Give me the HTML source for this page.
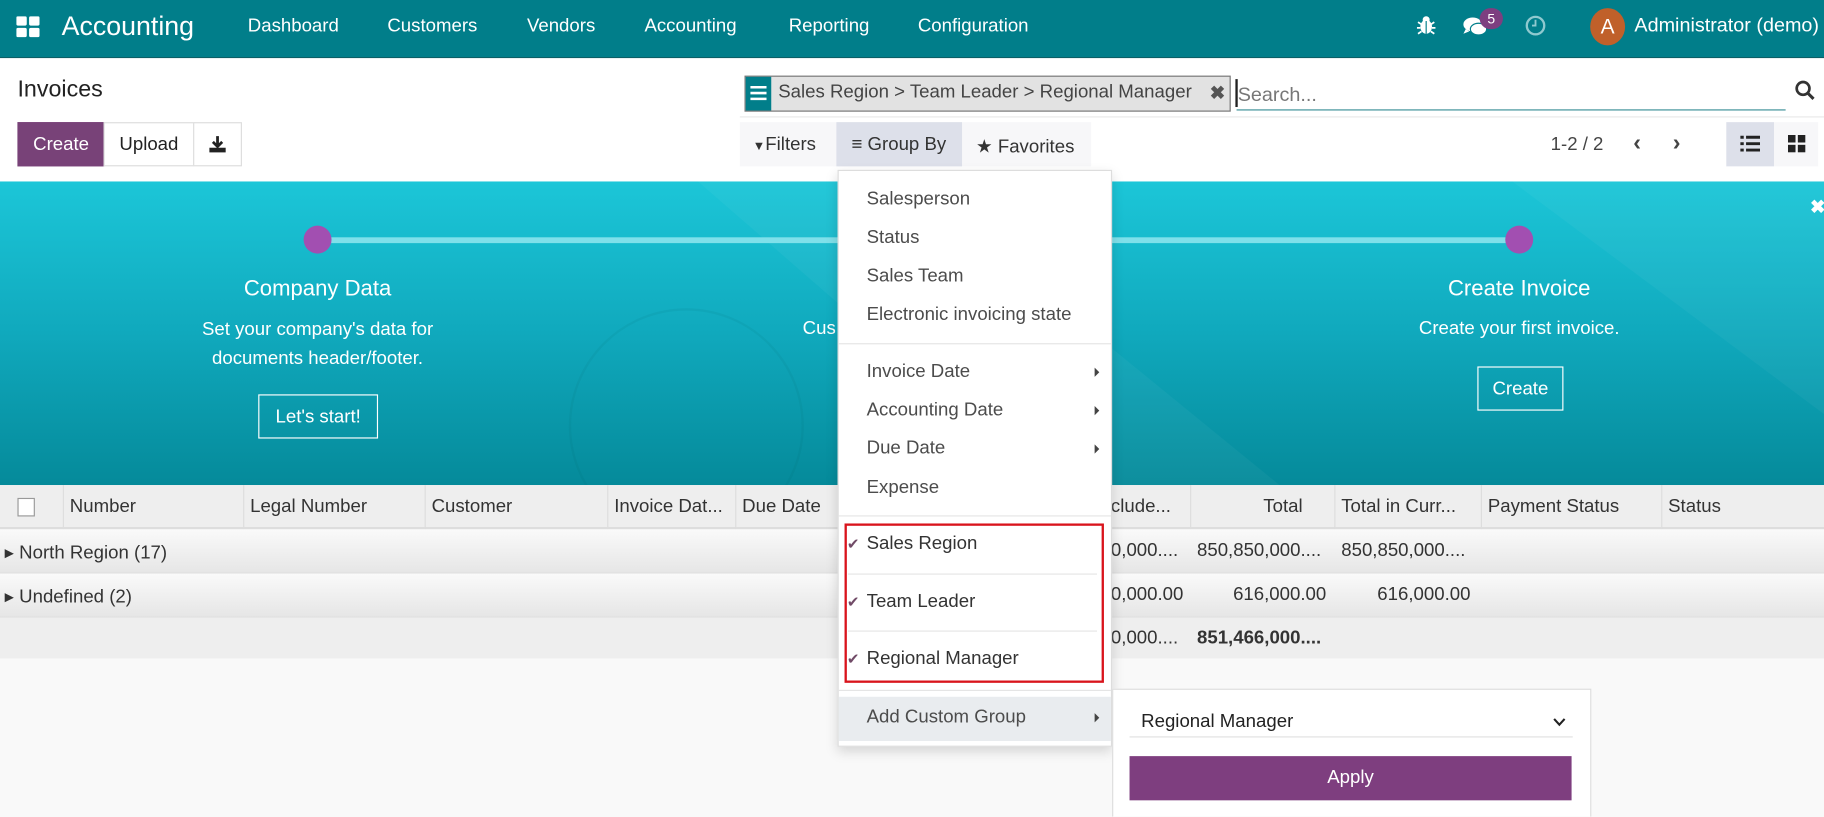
<!DOCTYPE html>
<html><head><meta charset="utf-8"><style>
*{box-sizing:border-box;margin:0;padding:0}
html,body{width:1824px;height:816px;overflow:hidden;background:#f9f9f9;font-family:"Liberation Sans",sans-serif;color:#4c4c4c}
#w{position:absolute;left:0;top:0;width:1568px;height:702px;transform:scale(1.16327);transform-origin:0 0;overflow:hidden;background:#f9f9f9}
.a{position:absolute;white-space:nowrap}
.nav{left:0;top:0;width:1568px;height:50px;background:#017e8a;border-bottom:1px solid #0b5f66;color:#fff}
.nav .a{font-size:16px;top:14px;color:#fff}
.cp{left:0;top:50px;width:1568px;height:106px;background:#fff}
.btn{position:absolute;top:105px;height:38px;border:1px solid #ddd;font-size:16px;line-height:37px;text-align:center;background:#fff;color:#222}
.banner{left:0;top:156px;width:1568px;height:261px;background:linear-gradient(180deg,#1cc6d8 0%,#10a9bd 50%,#058a9a 100%);overflow:hidden}
.bt{color:#fff;text-align:center;width:300px}
.dot{width:24px;height:24px;border-radius:50%;background:#a24fb1}
.obtn{border:1px solid #fff;color:#fff;font-size:16px;text-align:center;line-height:37px;height:38px}
.th{top:417px;height:38px;background:#eee;width:1568px;left:0;border-bottom:2px solid #ddd}
.th .a{font-size:16px;top:10px;color:#333}
.sep{position:absolute;top:0;width:1px;height:38px;background:#ddd}
.row{left:0;width:1568px;height:38px;background:linear-gradient(#fafafa,#e6e6e6);border-bottom:1px solid #ddd}
.row .a{font-size:16px;top:10px;color:#333}
.dd{left:720px;top:146px;width:236px;height:496px;background:#fff;border:1px solid #ddd;box-shadow:0 4px 10px rgba(0,0,0,.15)}
.dd .a{font-size:16px;color:#4c4c4c;left:24px}
.hr{position:absolute;left:0;width:234px;height:1px;background:#e5e5e5}
.car{position:absolute;left:220px;width:0;height:0;border-top:4px solid transparent;border-bottom:4px solid transparent;border-left:4px solid #444}
.chk{position:absolute;left:7px;color:#714b67;font-size:13px}
</style></head><body><div id="w">
<div class="a nav">
 <svg class="a" style="left:14px;top:14px" width="20" height="18" viewBox="0 0 20 18"><rect x="0" y="0" width="9" height="8" rx="1.5" fill="#fff"/><rect x="11" y="0" width="9" height="8" rx="1.5" fill="#fff"/><rect x="0" y="10" width="9" height="8" rx="1.5" fill="#fff"/><rect x="11" y="10" width="9" height="8" rx="1.5" fill="#fff"/></svg>
 <div class="a" style="left:53px;top:9px;font-size:23px">Accounting</div>
 <div class="a" style="left:213px">Dashboard</div>
 <div class="a" style="left:333px">Customers</div>
 <div class="a" style="left:453px">Vendors</div>
 <div class="a" style="left:554px">Accounting</div>
 <div class="a" style="left:678px">Reporting</div>
 <div class="a" style="left:789px">Configuration</div>
 <svg class="a" style="left:1218px;top:13px" width="16" height="17" viewBox="0 0 16 17"><ellipse cx="8" cy="10" rx="5" ry="6" fill="#fff"/><circle cx="8" cy="4" r="3" fill="#fff"/><path d="M1 6l3 2M15 6l-3 2M0 11h3M16 11h-3M1 16l3-2M15 16l-3-2" stroke="#fff" stroke-width="1.5"/><path d="M8 5v11" stroke="#017e8a" stroke-width="1"/></svg>
 <svg class="a" style="left:1257px;top:14px" width="22" height="18" viewBox="0 0 22 18"><ellipse cx="9" cy="7" rx="8" ry="6" fill="#fff"/><ellipse cx="14" cy="11" rx="7" ry="5" fill="#fff" stroke="#017e8a" stroke-width="1"/><path d="M3 11l-2 4 5-2z" fill="#fff"/></svg>
 <div class="a" style="left:1272px;top:7px;width:20px;height:18px;border-radius:9px;background:#7d3f80;font-size:12px;text-align:center;line-height:18px">5</div>
 <svg class="a" style="left:1311px;top:13px" width="18" height="18" viewBox="0 0 18 18"><circle cx="9" cy="9" r="7.5" fill="none" stroke="#8fc9cf" stroke-width="2"/><path d="M9 4v5h-3" stroke="#8fc9cf" stroke-width="1.6" fill="none"/></svg>
 <div class="a" style="left:1367px;top:7px;width:30px;height:32px;border-radius:50%;background:#c0602a;font-size:18px;text-align:center;line-height:32px">A</div>
 <div class="a" style="left:1405px;font-size:17px;top:12px">Administrator (demo)</div>
</div>
<div class="a cp">
 <div class="a" style="left:15px;top:16px;font-size:20px;color:#222">Invoices</div>
</div>
<div class="btn" style="left:15px;width:75px;background:#784278;color:#fff;border-color:#784278">Create</div>
<div class="btn" style="left:89px;width:78px">Upload</div>
<div class="btn" style="left:166px;width:42px"><svg style="margin-top:10px" width="16" height="16" viewBox="0 0 16 16"><path d="M8 1v8M4 6l4 4 4-4" stroke="#222" stroke-width="2.4" fill="none"/><rect x="1" y="11" width="14" height="4" fill="#222"/></svg></div>
<div class="a" style="left:640px;top:65px;width:418px;height:31px;background:#e2e2e2;border:1px solid #777"></div>
<div class="a" style="left:641px;top:66px;width:22px;height:29px;background:#017e8a"><svg style="margin:7px 0 0 4px" width="14" height="14" viewBox="0 0 14 14"><path d="M0 2h14M0 7h14M0 12h14" stroke="#fff" stroke-width="2.2"/></svg></div>
<div class="a" style="left:669px;top:71px;font-size:16px;color:#444">Sales Region &gt; Team Leader &gt; Regional Manager</div>
<div class="a" style="left:1040px;top:70px;font-size:16px;color:#555;font-weight:bold">✖</div>
<div class="a" style="left:1062px;top:68px;width:2px;height:24px;background:#222"></div>
<div class="a" style="left:1064px;top:72px;font-size:17px;color:#777">Search...</div>
<div class="a" style="left:1063px;top:94px;width:472px;height:1px;background:#3b8f97"></div>
<div class="a" style="left:636px;top:100px;width:932px;height:1px;background:#e8e8e8"></div>
<svg class="a" style="left:1543px;top:69px" width="17" height="17" viewBox="0 0 17 17"><circle cx="7" cy="7" r="5.5" fill="none" stroke="#333" stroke-width="2.3"/><path d="M11 11l5 5" stroke="#333" stroke-width="2.6"/></svg>
<div class="a" style="left:636px;top:105px;width:302px;height:38px;background:#f7f7f9"></div>
<div class="a" style="left:719px;top:105px;width:108px;height:38px;background:#dde0ea"></div>
<div class="a" style="left:647px;top:116px;font-size:16px;color:#333"><span style="font-size:11px">▼</span>Filters</div>
<div class="a" style="left:732px;top:116px;font-size:16px;color:#333">≡ Group By</div>
<div class="a" style="left:839px;top:116px;font-size:16px;color:#333">★ Favorites</div>
<div class="a" style="left:1333px;top:116px;font-size:16px;color:#444">1-2 / 2</div>
<div class="a" style="left:1404px;top:112px;font-size:20px;color:#444;font-weight:bold">‹</div>
<div class="a" style="left:1438px;top:112px;font-size:20px;color:#444;font-weight:bold">›</div>
<div class="a" style="left:1484px;top:105px;width:41px;height:38px;background:#dde0ea"></div>
<div class="a" style="left:1525px;top:105px;width:38px;height:38px;background:#f7f7f9"></div>
<svg class="a" style="left:1496px;top:116px" width="17" height="15" viewBox="0 0 17 15"><path d="M0 2h3M5 2h12M0 7.5h3M5 7.5h12M0 13h3M5 13h12" stroke="#222" stroke-width="2.5"/></svg>
<svg class="a" style="left:1537px;top:116px" width="15" height="15" viewBox="0 0 15 15"><rect width="6.5" height="6.5" fill="#222"/><rect x="8.5" width="6.5" height="6.5" fill="#222"/><rect y="8.5" width="6.5" height="6.5" fill="#222"/><rect x="8.5" y="8.5" width="6.5" height="6.5" fill="#222"/></svg>
<div class="a banner">
 <svg class="a" style="left:0;top:0" width="1568" height="261"><path d="M600 0 L900 261 L1100 261 L780 0Z" fill="rgba(255,255,255,.04)"/><path d="M1300 0 L1568 200 L1568 0Z" fill="rgba(255,255,255,.04)"/><circle cx="590" cy="210" r="100" fill="none" stroke="rgba(0,80,90,.07)" stroke-width="2"/></svg>
 <div class="a" style="left:273px;top:48px;width:1033px;height:5px;background:#7fe0ea"></div>
 <div class="a dot" style="left:261px;top:38px"></div>
 <div class="a dot" style="left:1294px;top:38px"></div>
 <div class="a bt" style="left:123px;top:82px;font-size:19px">Company Data</div>
 <div class="a bt" style="left:163px;top:115px;width:220px;font-size:16px;line-height:25px;white-space:normal">Set your company's data for documents header/footer.</div>
 <div class="a obtn" style="left:222px;top:183px;width:103px">Let's start!</div>
 <div class="a" style="left:690px;top:118px;font-size:16px;color:#fff">Cus</div>
 <div class="a bt" style="left:1156px;top:82px;font-size:19px">Create Invoice</div>
 <div class="a bt" style="left:1156px;top:118px;font-size:16px">Create your first invoice.</div>
 <div class="a obtn" style="left:1270px;top:159px;width:74px">Create</div>
 <div class="a" style="left:1556px;top:12px;font-size:16px;color:#fff;font-weight:bold">✖</div>
</div>
<div class="a th">
 <div class="a" style="left:15px;top:11px;width:15px;height:16px;background:#fff;border:1px solid #999"></div>
 <div class="sep" style="left:54px"></div><div class="sep" style="left:209px"></div><div class="sep" style="left:365px"></div><div class="sep" style="left:522px"></div><div class="sep" style="left:632px"></div><div class="sep" style="left:1023px"></div><div class="sep" style="left:1147px"></div><div class="sep" style="left:1273px"></div><div class="sep" style="left:1428px"></div>
 <div class="a" style="left:60px">Number</div>
 <div class="a" style="left:215px">Legal Number</div>
 <div class="a" style="left:371px">Customer</div>
 <div class="a" style="left:528px">Invoice Dat...</div>
 <div class="a" style="left:638px">Due Date</div>
 <div class="a" style="left:955px">clude...</div>
 <div class="a" style="left:1086px">Total</div>
 <div class="a" style="left:1153px">Total in Curr...</div>
 <div class="a" style="left:1279px">Payment Status</div>
 <div class="a" style="left:1434px">Status</div>
</div>
<div class="a row" style="top:455px">
 <div class="a" style="left:4px">▸ North Region (17)</div>
 <div class="a" style="left:955px">0,000....</div><div class="a" style="left:1029px">850,850,000....</div><div class="a" style="left:1153px">850,850,000....</div>
</div>
<div class="a row" style="top:493px">
 <div class="a" style="left:4px">▸ Undefined (2)</div>
 <div class="a" style="left:955px">0,000.00</div><div class="a" style="left:1060px">616,000.00</div><div class="a" style="left:1184px">616,000.00</div>
</div>
<div class="a row" style="top:531px;height:35px;background:#eee;border:none">
 <div class="a" style="left:955px;top:9px">0,000....</div><div class="a" style="left:1029px;top:9px;font-weight:bold">851,466,000....</div>
</div>
<div class="a dd">
 <div class="a" style="top:16px">Salesperson</div>
 <div class="a" style="top:49px">Status</div>
 <div class="a" style="top:82px">Sales Team</div>
 <div class="a" style="top:115px">Electronic invoicing state</div>
 <div class="hr" style="top:148px"></div>
 <div class="a" style="top:164px">Invoice Date</div><div class="car" style="top:169px"></div>
 <div class="a" style="top:197px">Accounting Date</div><div class="car" style="top:202px"></div>
 <div class="a" style="top:230px">Due Date</div><div class="car" style="top:235px"></div>
 <div class="a" style="top:264px">Expense</div>
 <div class="hr" style="top:296px"></div>
 <div class="a" style="left:5px;top:303px;width:223px;height:137px;border:2px solid #d9141c"></div>
 <div class="chk" style="top:313px">✔</div><div class="a" style="top:312px;color:#333">Sales Region</div>
 <div class="hr" style="top:346px;left:8px;width:214px"></div>
 <div class="chk" style="top:363px">✔</div><div class="a" style="top:362px;color:#333">Team Leader</div>
 <div class="hr" style="top:395px;left:8px;width:214px"></div>
 <div class="chk" style="top:412px">✔</div><div class="a" style="top:411px;color:#333">Regional Manager</div>
 <div class="hr" style="top:446px"></div>
 <div class="a" style="left:0;top:452px;width:234px;height:38px;background:#e9ecef"></div>
 <div class="a" style="top:461px">Add Custom Group</div><div class="car" style="top:466px"></div>
</div>
<div class="a" style="left:956px;top:592px;width:412px;height:120px;background:#fff;border:1px solid #ddd"></div>
<div class="a" style="left:981px;top:612px;font-size:16px;color:#222">Regional Manager</div>
<svg class="a" style="left:1335px;top:617px" width="11" height="8" viewBox="0 0 11 8"><path d="M1 1l4.5 5L10 1" stroke="#222" stroke-width="1.8" fill="none"/></svg>
<div class="a" style="left:971px;top:633px;width:381px;height:1px;background:#e0e0e0"></div>
<div class="a" style="left:971px;top:650px;width:380px;height:38px;background:#7e3e7f;color:#fff;font-size:16px;text-align:center;line-height:38px">Apply</div>
</div></body></html>
